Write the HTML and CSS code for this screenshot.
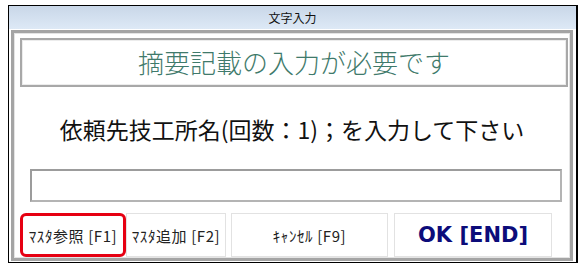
FILE: index.html
```html
<!DOCTYPE html>
<html lang="ja">
<head>
<meta charset="UTF-8">
<title>文字入力</title>
<link rel="stylesheet" href="styles.css">
</head>
<body>

<div class="window">
  <div class="titlebar">文字入力</div>

  <div class="panel">
    <div class="notice">摘要記載の入力が必要です</div>

    <div class="prompt">依頼先技工所名(回数：1)；を入力して下さい</div>

    <input class="entry" type="text">

    <!-- FUNCTION KEYS -->
    <div class="keys">
      <button class="key key-ref">ﾏｽﾀ参照 [F1]</button>
      <button class="key key-add">ﾏｽﾀ追加 [F2]</button>
      <button class="key key-cancel">ｷｬﾝｾﾙ [F9]</button>
      <button class="key key-ok">OK [END]</button>
    </div>
  </div>
</div>

</body>
</html>
```

FILE: styles.css
```css
body {
  margin: 0;
  background: #fff;
  font-family: "Noto Sans CJK JP", "Noto Sans", sans-serif;
}

/* WINDOW */
.window {
  margin: 5px 0 0 8px;
  width: 567px;
  height: 256px;
  border: 1px solid #000;
  border-right-width: 2px;
  background: #fff;
  display: flex;
  flex-direction: column;
}

.titlebar {
  height: 23px;
  line-height: 23px;
  text-align: center;
  font-size: 12px;
  color: #111;
  background: linear-gradient(#c9d7e8, #dde9f6);
}

/* PANEL */
.panel {
  flex: 1;
  margin: 1px 3px 1px 2px;
  border: 3px solid #a4a4a4;
  box-shadow: inset 0 0 0 1px #e4e4e4;
  padding: 5px 0 1px 0;
  display: flex;
  flex-direction: column;
}

.notice {
  margin: 0 2px 0 6px;
  height: 45px;
  border: 2px solid #a8a8a8;
  box-shadow: inset 0 0 0 1px #ececec;
  text-align: center;
  line-height: 44px;
  font-size: 26px;
  font-weight: 300;
  color: #3f7a6b;
}

.prompt {
  height: 82px;
  line-height: 84px;
  text-align: center;
  font-size: 23px;
  color: #111;
}

.entry {
  margin: 0 8px 0 16px;
  height: 33px;
  box-sizing: border-box;
  border: 2px solid #b4b4b4;
  border-top-color: #9c9c9c;
  border-left-color: #9c9c9c;
  outline: none;
  padding: 0 6px;
  font-size: 16px;
}

/* KEYS */
.keys {
  margin-top: 11px;
  padding-left: 6px;
  display: flex;
  height: 44px;
}

.key {
  height: 44px;
  box-sizing: border-box;
  background: #fff;
  border: 1px solid #e2e2e2;
  font-family: "Noto Sans CJK JP", sans-serif;
  font-size: 15px;
  letter-spacing: 0.6px;
  color: #222;
  padding: 0;
  cursor: pointer;
  white-space: nowrap;
}

.key-ref {
  width: 106px;
  border: 3px solid #e60012;
  border-radius: 6px;
}

.key-add {
  width: 100px;
}

.key-cancel {
  width: 157px;
  margin-left: 5px;
}

.key-ok {
  width: 158px;
  margin-left: 6px;
  font-family: "DejaVu Sans", sans-serif;
  font-weight: bold;
  font-size: 21px;
  letter-spacing: 0;
  color: #0c0c7a;
}
```
